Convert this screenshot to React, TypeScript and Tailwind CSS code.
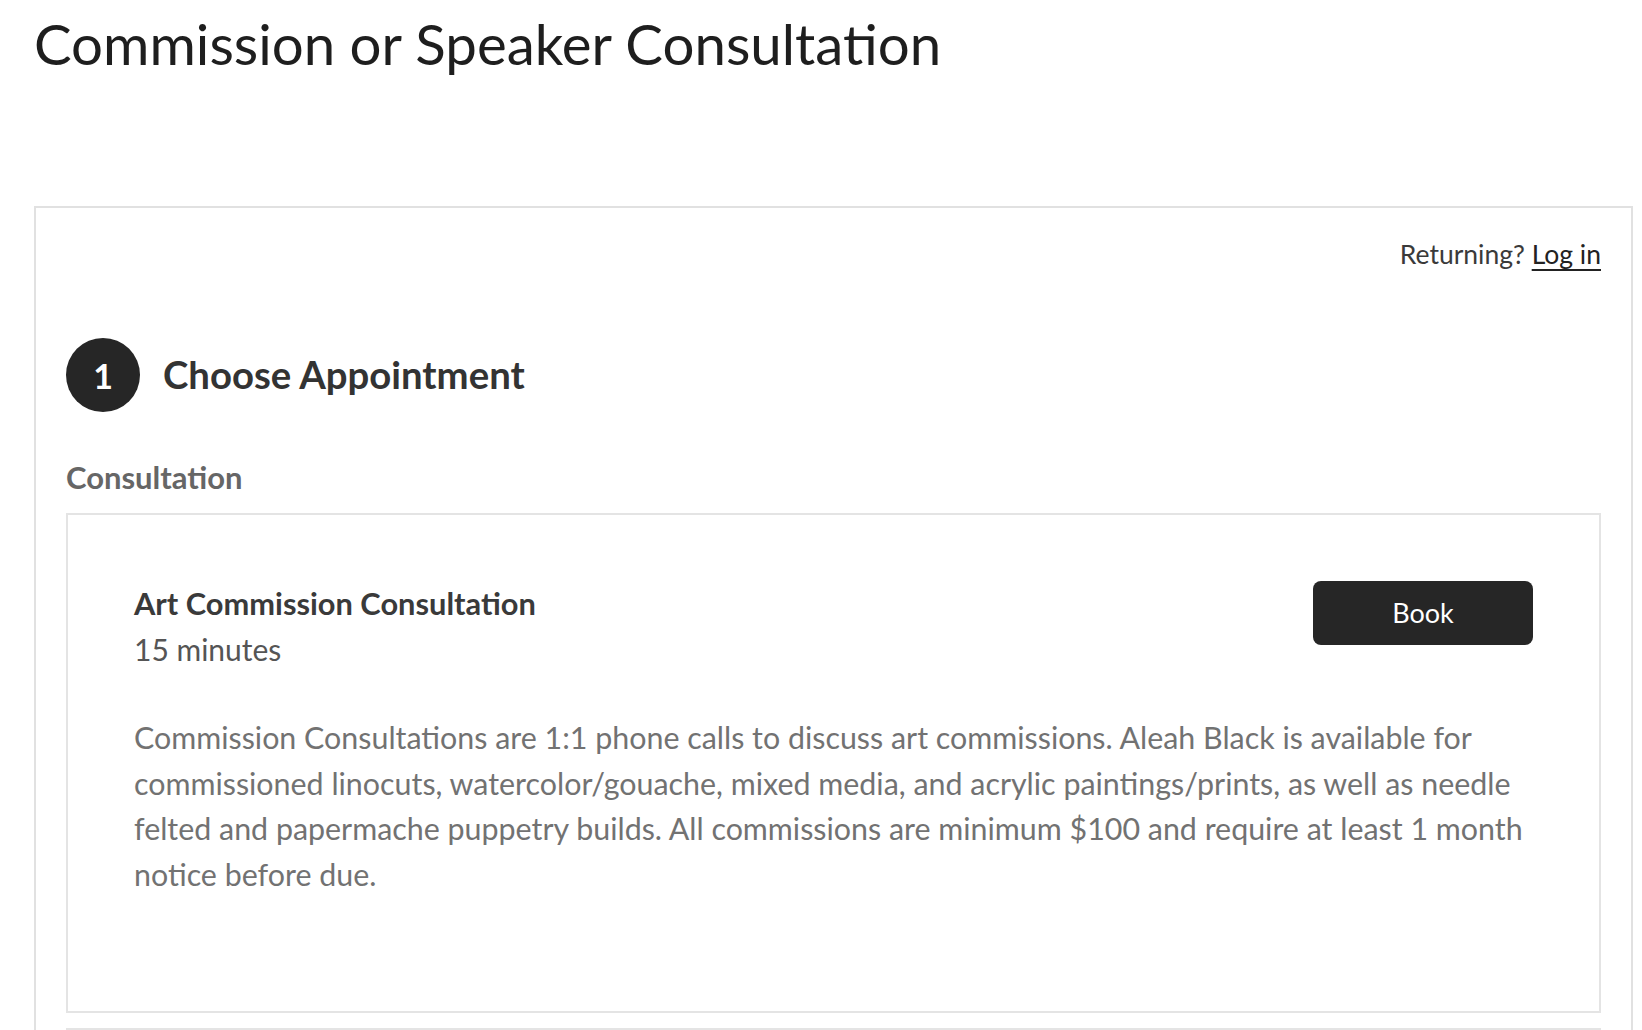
export default function App() {
  return (
    <div className="min-h-screen bg-white pl-[34px] pr-[9px] pt-[8px] font-['Lato',sans-serif]">
      <h1 className="text-[56.4px] leading-[70px] font-normal text-[#1e1e1e]">
        Commission or Speaker Consultation
      </h1>

      <div className="mt-[128px] border-2 border-[#e1e1e1] px-[30px] pt-[26px]">
        <div className="flex justify-end text-[26.5px] leading-[40px] text-[#3a3a3a]">
          <span>
            Returning?{' '}
            <a href="#" className="underline underline-offset-[5px] decoration-[2px] text-[#222]">
              Log in
            </a>
          </span>
        </div>

        <div className="mt-[64px] flex items-center gap-[23px]">
          <div className="flex h-[74px] w-[74px] items-center justify-center rounded-full bg-[#262626] text-[34px] font-bold text-white">
            1
          </div>
          <h2 className="text-[38.3px] font-bold text-[#333]">Choose Appointment</h2>
        </div>

        <h3 className="mt-[43px] text-[31px] leading-[44px] font-bold text-[#666]">Consultation</h3>

        <div className="mt-[14px] border-2 border-[#e4e4e4] px-[66px] pt-[66px] pb-[113px]">
          <div className="flex items-start justify-between">
            <div>
              <div className="text-[30.8px] leading-[46px] font-bold text-[#3a3a3a]">
                Art Commission Consultation
              </div>
              <div className="text-[30px] leading-[44px] text-[#555]">15 minutes</div>
            </div>
            <button
              type="button"
              className="mt-[0px] h-[64px] w-[220px] rounded-[8px] bg-[#262626] text-[27px] text-white"
            >
              Book
            </button>
          </div>
          <p className="mt-[44px] text-[30.4px] leading-[45.7px] text-[#727272]">
            Commission Consultations are 1:1 phone calls to discuss art commissions. Aleah Black is available for
            commissioned linocuts, watercolor/gouache, mixed media, and acrylic paintings/prints, as well as needle
            felted and papermache puppetry builds. All commissions are minimum $100 and require at least 1 month
            notice before due.
          </p>
        </div>
        <div className="mt-[15px] h-[40px] border-2 border-b-0 border-[#e4e4e4]" />
      </div>
    </div>
  );
}
